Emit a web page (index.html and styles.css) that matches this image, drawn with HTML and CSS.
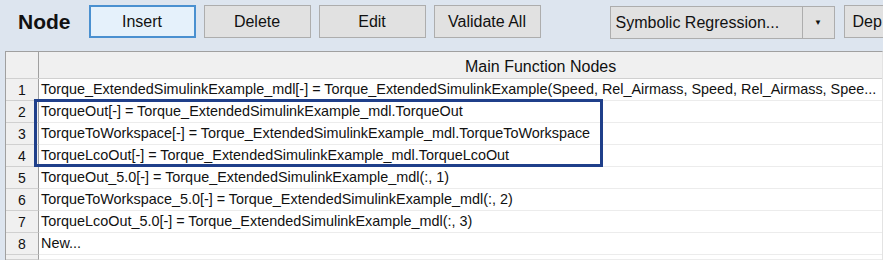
FILE: index.html
```html
<!DOCTYPE html>
<html lang="en">
<head>
    <meta charset="UTF-8">
    <title>Node</title>
    <link rel="stylesheet" href="styles.css">
</head>
<body>

    <div class="toolbar">
        <h1 class="title">Node</h1>
        <button class="btn active">Insert</button>
        <button class="btn">Delete</button>
        <button class="btn">Edit</button>
        <button class="btn">Validate All</button>
        <div class="combo">
            <span class="combo-text">Symbolic Regression...</span>
            <span class="combo-arrow">&#9660;</span>
        </div>
        <button class="btn btn-cut">Dep</button>
    </div>

    <div class="grid">
        <div class="grid-row head">
            <div class="num"></div>
            <div class="cell">Main Function Nodes</div>
        </div>
        <div class="grid-row">
            <div class="num">1</div>
            <div class="cell">Torque_ExtendedSimulinkExample_mdl[-] = Torque_ExtendedSimulinkExample(Speed, Rel_Airmass, Speed, Rel_Airmass, Spee...</div>
        </div>
        <div class="selection">
            <div class="grid-row">
                <div class="num">2</div>
                <div class="cell">TorqueOut[-] = Torque_ExtendedSimulinkExample_mdl.TorqueOut</div>
            </div>
            <div class="grid-row">
                <div class="num">3</div>
                <div class="cell">TorqueToWorkspace[-] = Torque_ExtendedSimulinkExample_mdl.TorqueToWorkspace</div>
            </div>
            <div class="grid-row">
                <div class="num">4</div>
                <div class="cell">TorqueLcoOut[-] = Torque_ExtendedSimulinkExample_mdl.TorqueLcoOut</div>
            </div>
            <div class="box"></div>
        </div>
        <div class="grid-row">
            <div class="num">5</div>
            <div class="cell">TorqueOut_5.0[-] = Torque_ExtendedSimulinkExample_mdl(:, 1)</div>
        </div>
        <div class="grid-row">
            <div class="num">6</div>
            <div class="cell">TorqueToWorkspace_5.0[-] = Torque_ExtendedSimulinkExample_mdl(:, 2)</div>
        </div>
        <div class="grid-row">
            <div class="num">7</div>
            <div class="cell">TorqueLcoOut_5.0[-] = Torque_ExtendedSimulinkExample_mdl(:, 3)</div>
        </div>
        <div class="grid-row">
            <div class="num">8</div>
            <div class="cell">New...</div>
        </div>
        <div class="grid-row last">
            <div class="num"></div>
            <div class="cell"></div>
        </div>
    </div>

</body>
</html>
```

FILE: styles.css
```css
body {
    font-family: "Liberation Sans", Arial, sans-serif;
    background-color: #dde5ef;
    margin: 0;
    padding: 0;
    width: 883px;
    height: 260px;
    overflow: hidden;
}
.toolbar {
    display: flex;
    align-items: center;
    height: 51px;
    padding-left: 18px;
    white-space: nowrap;
    overflow: hidden;
}
.title {
    margin: 0 18px 0 0;
    font-size: 21px;
    font-weight: bold;
    color: #111;
    padding-bottom: 8px;
}
.btn {
    font-family: inherit;
    font-size: 16px;
    color: #111;
    width: 107px;
    height: 33px;
    margin-right: 8px;
    margin-bottom: 8px;
    background-color: #e1e1e1;
    border: 1px solid #adadad;
    border-radius: 0;
    padding: 0;
    flex-shrink: 0;
}
.btn.active {
    background-color: #e5f1fb;
    border: 2px solid #4a90d0;
}
.combo {
    display: flex;
    height: 31px;
    margin-left: 61px;
    margin-bottom: 6px;
    border: 1px solid #adadad;
    background-color: #e1e1e1;
    font-size: 16px;
    color: #111;
    flex-shrink: 0;
}
.combo-text {
    width: 186px;
    padding-left: 5px;
    line-height: 31px;
    border-right: 1px solid #adadad;
    overflow: hidden;
}
.combo-arrow {
    width: 31px;
    text-align: center;
    font-size: 8px;
    line-height: 31px;
}
.btn-cut {
    margin-left: 9px;
    text-align: left;
    padding-left: 8px;
}
.grid {
    margin-left: 5px;
    width: 876px;
    border-top: 1px solid #a0a0a0;
    border-left: 1px solid #a0a0a0;
    border-right: 1px solid #e3e3e3;
    background-color: #fff;
    overflow: hidden;
}
.grid-row {
    display: flex;
    height: 22px;
    border-bottom: 1px solid #ececec;
    box-sizing: border-box;
}
.grid-row.head {
    height: 27px;
    border-bottom: 1px solid #d0d0d0;
}
.grid-row.last {
    height: 5px;
}
.num {
    width: 32px;
    flex-shrink: 0;
    background-color: #f0f0f0;
    border-right: 1px solid #a0a0a0;
    border-bottom: 1px solid #d0d0d0;
    margin-bottom: -1px;
    font-size: 14px;
    color: #111;
    text-align: center;
    line-height: 22px;
}
.head .num {
    margin-bottom: 0;
    border-bottom: none;
}
.cell {
    flex: 1;
    padding-left: 2px;
    font-size: 14.4px;
    color: #111;
    line-height: 21px;
    white-space: nowrap;
    overflow: hidden;
}
.head .cell {
    background-color: #f0f0f0;
    font-size: 16px;
    line-height: 30px;
    padding-left: 426px;
}
.selection {
    position: relative;
}
.box {
    position: absolute;
    left: 28px;
    top: -2px;
    width: 563px;
    height: 62px;
    border: 3px solid #1f3f8a;
    pointer-events: none;
}
```
